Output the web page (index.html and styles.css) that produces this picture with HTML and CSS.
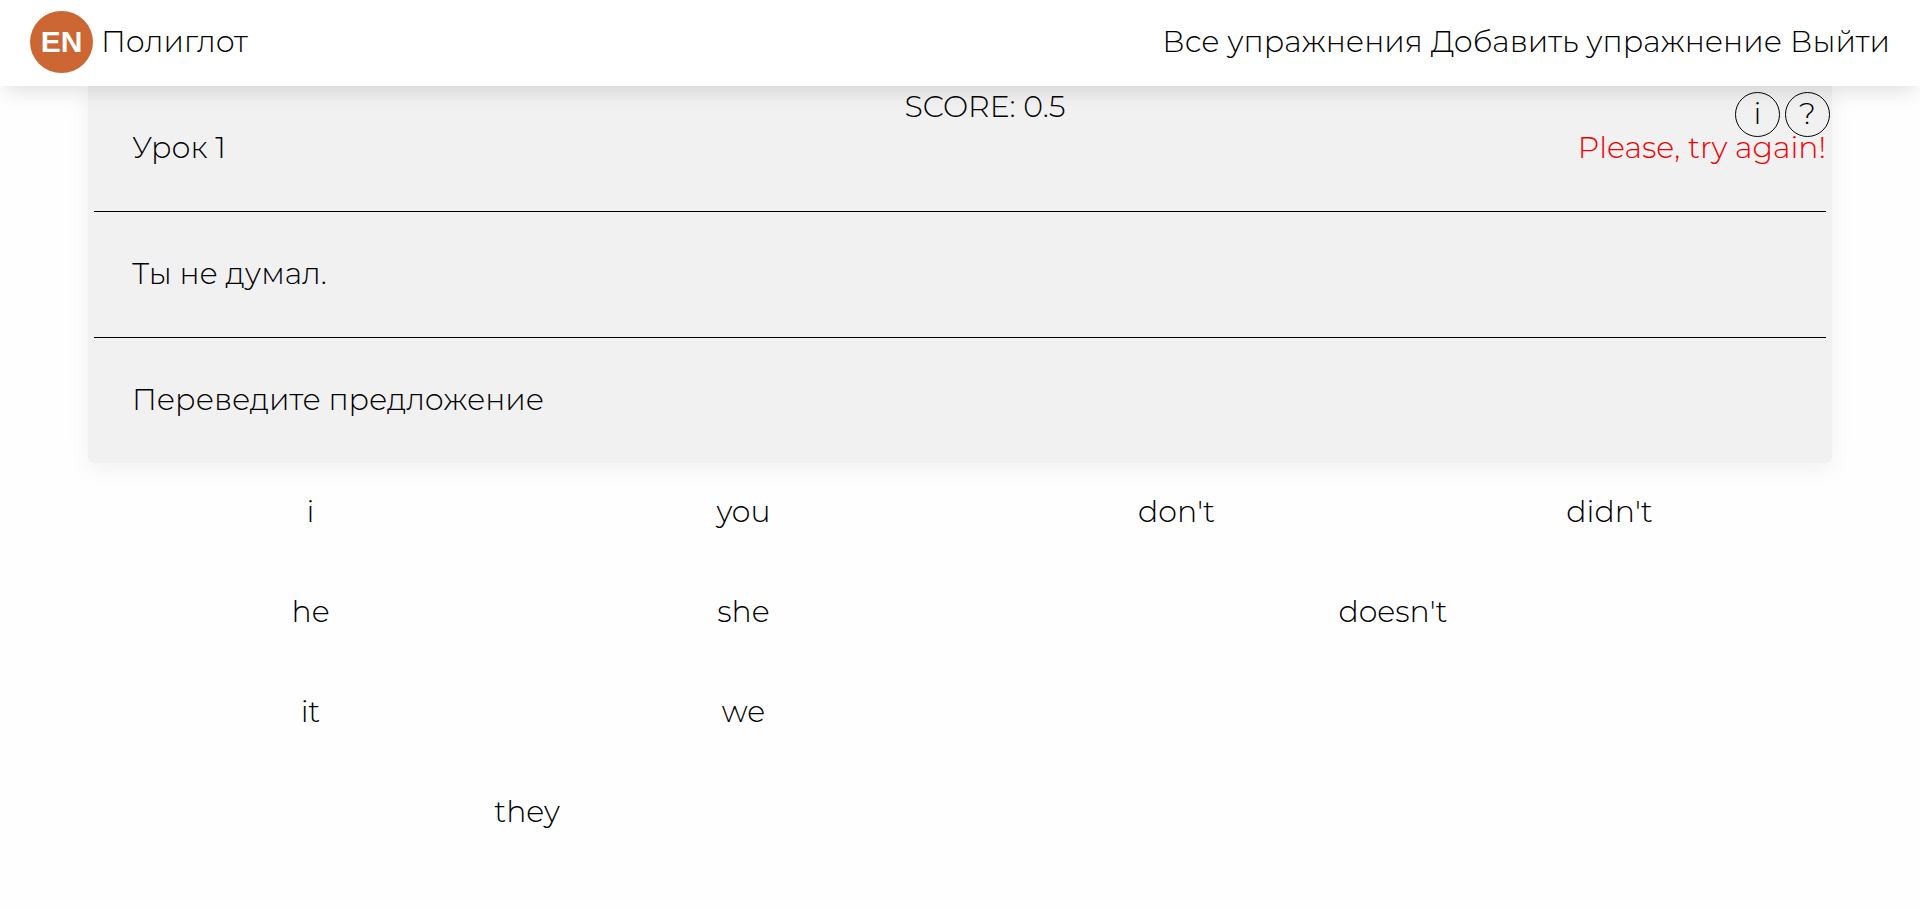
FILE: index.html
```html
<!DOCTYPE html>
<html lang="ru">
<head>
  <meta charset="utf-8">
  <meta name="viewport" content="width=device-width, initial-scale=1">
  <title>Полиглот</title>
  <link rel="stylesheet" href="styles.css">
</head>
<body>
  <header class="header">
    <a class="brand" href="#">
      <span class="brand-badge">EN</span>
      <span>Полиглот</span>
    </a>
    <nav class="nav">
      <a class="nav-link" href="#">Все упражнения</a>
      <a class="nav-link" href="#">Добавить упражнение</a>
      <a class="nav-link" href="#">Выйти</a>
    </nav>
  </header>
  <main class="main">
    <section class="card">
      <div class="row row-lesson">
        <div class="toolbar">
          <span class="score">SCORE: 0.5</span>
          <div class="tools">
            <button class="tool" type="button">i</button>
            <button class="tool" type="button">?</button>
          </div>
        </div>
        <div class="lesson">
          <span>Урок 1</span>
          <span class="message">Please, try again!</span>
        </div>
      </div>
      <div class="row">Ты не думал.</div>
      <div class="row">Переведите предложение</div>
    </section>
    <section class="words">
      <div class="group">
        <button class="word" type="button">i</button>
        <button class="word" type="button">you</button>
        <button class="word" type="button">he</button>
        <button class="word" type="button">she</button>
        <button class="word" type="button">it</button>
        <button class="word" type="button">we</button>
        <button class="word word-wide" type="button">they</button>
      </div>
      <div class="group">
        <button class="word" type="button">don't</button>
        <button class="word" type="button">didn't</button>
        <button class="word word-wide" type="button">doesn't</button>
      </div>
    </section>
  </main>
</body>
</html>
```
FILE: styles.css
```css
* {
  box-sizing: border-box;
}

body {
  margin: 0;
  background: #fefefe;
  color: #000;
  font-family: Montserrat, Inter, sans-serif;
  font-size: 30px;
  font-weight: 350;
  line-height: 36px;
}

button {
  padding: 0;
  border: 0;
  background: none;
  color: inherit;
  font: inherit;
  cursor: pointer;
}

a {
  color: inherit;
  text-decoration: none;
}

.header {
  position: sticky;
  top: 0;
  z-index: 1;
  display: flex;
  align-items: center;
  justify-content: space-between;
  padding: 11px 30px 13px;
  background: #fff;
  box-shadow: 0 10px 20px -5px rgba(0, 0, 0, 0.12);
}

.brand {
  display: flex;
  align-items: center;
  gap: 8px;
}

.brand-badge {
  display: grid;
  place-items: center;
  width: 63px;
  height: 62px;
  border-radius: 50%;
  background: #cc6633;
  color: #fff;
  font-family: "Liberation Sans", Arial, sans-serif;
  font-size: 30px;
  font-weight: 700;
}

.nav {
  display: flex;
  gap: 8px;
}

.main {
  margin: 0 88px;
}

.card {
  padding: 0 6px;
  border-radius: 0 0 6px 6px;
  background: #f1f1f1;
  box-shadow: 0 5px 25px rgba(0, 0, 0, 0.06);
}

.row {
  padding: 44px 0 45px 38px;
}

.row + .row {
  border-top: 1px solid #000;
}

.row-lesson {
  padding-top: 0;
}

/* The round tools hang slightly over the lesson line below. */
.toolbar {
  position: relative;
  height: 44px;
  padding-top: 3px;
  text-align: center;
}

.score {
  padding-left: 12px;
}

.tools {
  position: absolute;
  top: 6px;
  right: -4px;
  display: flex;
  gap: 5px;
}

.tool {
  width: 45px;
  height: 45px;
  padding-bottom: 2px;
  border: 1px solid #000;
  border-radius: 50%;
}

.lesson {
  display: flex;
  justify-content: space-between;
}

.message {
  color: #f00000;
}

.words {
  display: grid;
  grid-template-columns: 1fr 1fr;
  align-items: start;
  padding: 0 6px;
}

.group {
  display: grid;
  grid-template-columns: 1fr 1fr;
  grid-auto-rows: 100px;
}

.word {
  padding-bottom: 2px;
}

.word-wide {
  grid-column: span 2;
}
```
